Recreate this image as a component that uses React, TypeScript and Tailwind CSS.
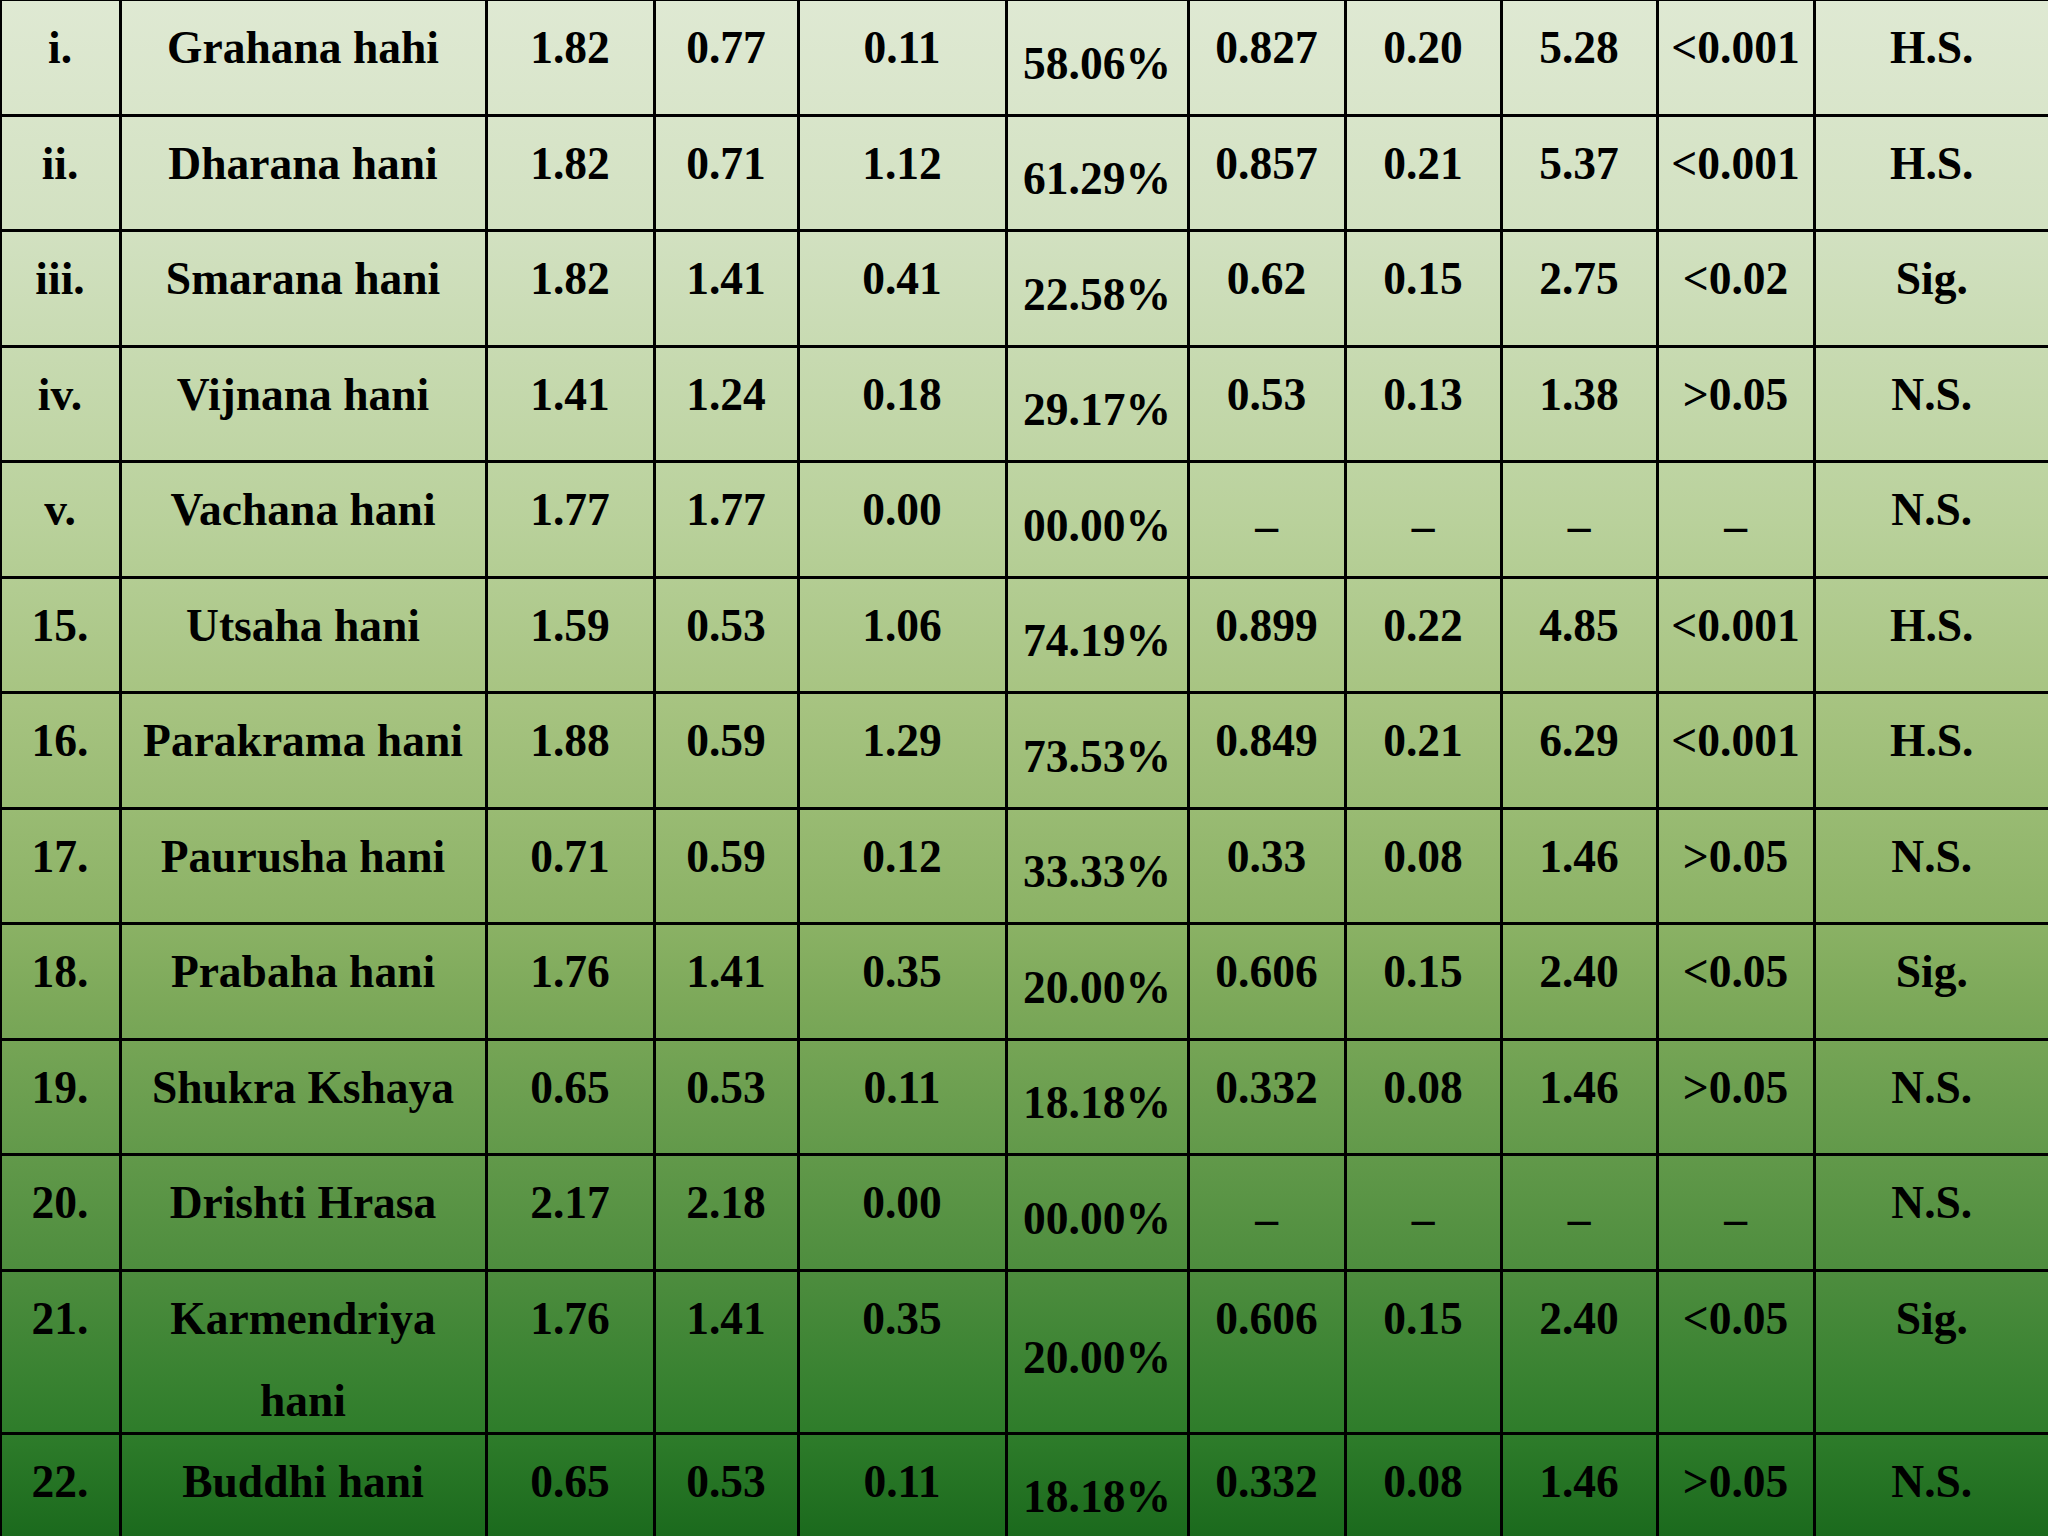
import React from "react";

type Row = {
  no: string;
  name: React.ReactNode;
  bt: string;
  at: string;
  diff: string;
  pct: string;
  sd: string;
  se: string;
  t: string;
  p: string;
  res: string;
  tall?: boolean;
};

const rows: Row[] = [
  { no: "i.", name: "Grahana hahi", bt: "1.82", at: "0.77", diff: "0.11", pct: "58.06%", sd: "0.827", se: "0.20", t: "5.28", p: "<0.001", res: "H.S." },
  { no: "ii.", name: "Dharana hani", bt: "1.82", at: "0.71", diff: "1.12", pct: "61.29%", sd: "0.857", se: "0.21", t: "5.37", p: "<0.001", res: "H.S." },
  { no: "iii.", name: "Smarana hani", bt: "1.82", at: "1.41", diff: "0.41", pct: "22.58%", sd: "0.62", se: "0.15", t: "2.75", p: "<0.02", res: "Sig." },
  { no: "iv.", name: "Vijnana hani", bt: "1.41", at: "1.24", diff: "0.18", pct: "29.17%", sd: "0.53", se: "0.13", t: "1.38", p: ">0.05", res: "N.S." },
  { no: "v.", name: "Vachana hani", bt: "1.77", at: "1.77", diff: "0.00", pct: "00.00%", sd: "–", se: "–", t: "–", p: "–", res: "N.S." },
  { no: "15.", name: "Utsaha hani", bt: "1.59", at: "0.53", diff: "1.06", pct: "74.19%", sd: "0.899", se: "0.22", t: "4.85", p: "<0.001", res: "H.S." },
  { no: "16.", name: "Parakrama hani", bt: "1.88", at: "0.59", diff: "1.29", pct: "73.53%", sd: "0.849", se: "0.21", t: "6.29", p: "<0.001", res: "H.S." },
  { no: "17.", name: "Paurusha hani", bt: "0.71", at: "0.59", diff: "0.12", pct: "33.33%", sd: "0.33", se: "0.08", t: "1.46", p: ">0.05", res: "N.S." },
  { no: "18.", name: "Prabaha hani", bt: "1.76", at: "1.41", diff: "0.35", pct: "20.00%", sd: "0.606", se: "0.15", t: "2.40", p: "<0.05", res: "Sig." },
  { no: "19.", name: "Shukra Kshaya", bt: "0.65", at: "0.53", diff: "0.11", pct: "18.18%", sd: "0.332", se: "0.08", t: "1.46", p: ">0.05", res: "N.S." },
  { no: "20.", name: "Drishti Hrasa", bt: "2.17", at: "2.18", diff: "0.00", pct: "00.00%", sd: "–", se: "–", t: "–", p: "–", res: "N.S." },
  {
    no: "21.",
    name: (
      <div className="h-[150px]">
        Karmendriya
        <br />
        hani
      </div>
    ),
    bt: "1.76", at: "1.41", diff: "0.35", pct: "20.00%", sd: "0.606", se: "0.15", t: "2.40", p: "<0.05", res: "Sig.",
    tall: true,
  },
  { no: "22.", name: "Buddhi hani", bt: "0.65", at: "0.53", diff: "0.11", pct: "18.18%", sd: "0.332", se: "0.08", t: "1.46", p: ">0.05", res: "N.S." },
];

const top = "border-[3px] border-black p-0 pt-[6px] align-top text-center";
const mid = "border-[3px] border-black p-0 pt-[13px] align-middle text-center";

export default function App() {
  return (
    <div className="w-[2048px] h-[1536px] overflow-hidden bg-[linear-gradient(180deg,#dfe9d3_0%,#d2e1c1_15%,#b9d19b_34%,#a6c380_46%,#8bb265_60%,#7da95a_65%,#4a8b3c_84%,#2f7d2b_93%,#1b6a1d_100%)]">
      <table className="-mt-[2px] -ml-[1.5px] w-[2049.5px] table-fixed border-collapse font-['Liberation_Serif','Times_New_Roman',serif] font-bold text-[45.5px] leading-[82px] text-black">
        <colgroup>
          <col className="w-[120px]" />
          <col className="w-[366px]" />
          <col className="w-[168px]" />
          <col className="w-[144px]" />
          <col className="w-[208px]" />
          <col className="w-[182px]" />
          <col className="w-[157px]" />
          <col className="w-[156px]" />
          <col className="w-[156px]" />
          <col className="w-[157px]" />
          <col className="w-[235.5px]" />
        </colgroup>
        <tbody>
          {rows.map((r) => {
            const dash = r.sd === "–";
            return (
              <tr key={r.no} className={r.tall ? "h-[163px]" : "h-[115.5px]"}>
                <td className={top}>{r.no}</td>
                <td className={top}>{r.name}</td>
                <td className={top}>{r.bt}</td>
                <td className={top}>{r.at}</td>
                <td className={top}>{r.diff}</td>
                <td className={mid}>{r.pct}</td>
                <td className={dash ? mid : top}>{r.sd}</td>
                <td className={dash ? mid : top}>{r.se}</td>
                <td className={dash ? mid : top}>{r.t}</td>
                <td className={dash ? mid : top}>{r.p}</td>
                <td className={top}>{r.res}</td>
              </tr>
            );
          })}
        </tbody>
      </table>
    </div>
  );
}
